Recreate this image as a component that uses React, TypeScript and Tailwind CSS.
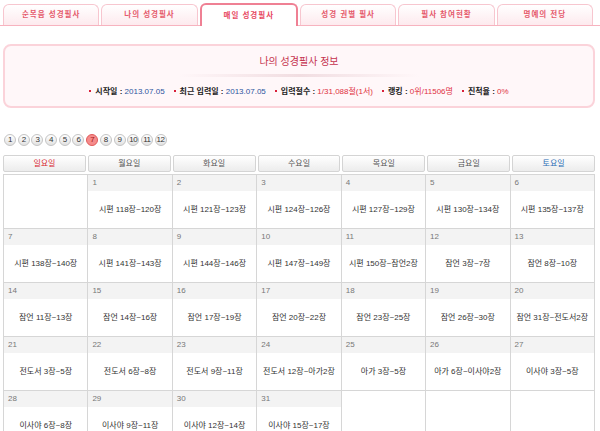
const tabs = ["순복음 성경필사", "나의 성경필사", "매일 성경필사", "성경 권별 필사", "필사 참여현황", "명예의 전당"];
const days = ["일요일", "월요일", "화요일", "수요일", "목요일", "금요일", "토요일"];

type Cell = { day: number; text: string } | null;

const weeks: Cell[][] = [
  [
    null,
    { day: 1, text: "시편 118장~120장" },
    { day: 2, text: "시편 121장~123장" },
    { day: 3, text: "시편 124장~126장" },
    { day: 4, text: "시편 127장~129장" },
    { day: 5, text: "시편 130장~134장" },
    { day: 6, text: "시편 135장~137장" },
  ],
  [
    { day: 7, text: "시편 138장~140장" },
    { day: 8, text: "시편 141장~143장" },
    { day: 9, text: "시편 144장~146장" },
    { day: 10, text: "시편 147장~149장" },
    { day: 11, text: "시편 150장~잠언2장" },
    { day: 12, text: "잠언 3장~7장" },
    { day: 13, text: "잠언 8장~10장" },
  ],
  [
    { day: 14, text: "잠언 11장~13장" },
    { day: 15, text: "잠언 14장~16장" },
    { day: 16, text: "잠언 17장~19장" },
    { day: 17, text: "잠언 20장~22장" },
    { day: 18, text: "잠언 23장~25장" },
    { day: 19, text: "잠언 26장~30장" },
    { day: 20, text: "잠언 31장~전도서2장" },
  ],
  [
    { day: 21, text: "전도서 3장~5장" },
    { day: 22, text: "전도서 6장~8장" },
    { day: 23, text: "전도서 9장~11장" },
    { day: 24, text: "전도서 12장~아가2장" },
    { day: 25, text: "아가 3장~5장" },
    { day: 26, text: "아가 6장~이사야2장" },
    { day: 27, text: "이사야 3장~5장" },
  ],
  [
    { day: 28, text: "이사야 6장~8장" },
    { day: 29, text: "이사야 9장~11장" },
    { day: 30, text: "이사야 12장~14장" },
    { day: 31, text: "이사야 15장~17장" },
    null,
    null,
    null,
  ],
];

function Bullet() {
  return <span className="inline-block w-[2px] h-[2px] bg-[#d9203a] mr-[4px] mb-[2px] align-middle" />;
}

export default function App() {
  const active = 2;
  const month = 7;

  return (
    <div className="w-[600px] h-[431px] overflow-hidden bg-white font-['Liberation_Sans','Noto_Sans_CJK_KR',sans-serif]">
      {/* tabs */}
      <div className="flex items-end gap-[2px] pl-[3px] pr-[7px] pt-[3px] border-b border-[#f7b3bf] h-[26px]">
        {tabs.map((t, i) =>
          i === active ? (
            <div
              key={t}
              className="flex-1 h-[23px] -mb-px bg-white border-2 border-b-0 border-[#ef8094] rounded-t-[6px] flex items-center justify-center text-[7.5px] font-bold tracking-[1px] text-[#e7485f]"
            >
              {t}
            </div>
          ) : (
            <div
              key={t}
              className="flex-1 h-[21px] bg-gradient-to-b from-white to-[#fdeaee] border border-b-0 border-[#f7c6cf] rounded-t-[6px] flex items-center justify-center text-[7.5px] font-bold tracking-[1px] text-[#e55a6c]"
            >
              {t}
            </div>
          )
        )}
      </div>

      {/* info box */}
      <div className="mx-[3px] mr-[5px] mt-[18px] h-[64px] border-2 border-[#fbd3da] bg-[#fff7f9] rounded-[8px] flex flex-col items-center">
        <div className="mt-[10px] text-[10px] leading-[12px] text-[#c5334f]">나의 성경필사 정보</div>
        <div className="mt-[6px] h-[3px] w-[240px] bg-gradient-to-r from-transparent via-[#f1dde1] to-transparent" />
        <div className="mt-[10px] text-[8px] leading-[10px] text-[#222] flex gap-[9px] whitespace-nowrap">
          <span>
            <Bullet />
            <b>시작일 :</b> <span className="text-[#2c55a0]">2013.07.05</span>
          </span>
          <span>
            <Bullet />
            <b>최근 입력일 :</b> <span className="text-[#2c55a0]">2013.07.05</span>
          </span>
          <span>
            <Bullet />
            <b>입력절수 :</b> <span className="text-[#e0313f]">1/31,088절(1서)</span>
          </span>
          <span>
            <Bullet />
            <b>랭킹 :</b> <span className="text-[#e0313f]">0위/11506명</span>
          </span>
          <span>
            <Bullet />
            <b>진척율 :</b> <span className="text-[#e0313f]">0%</span>
          </span>
        </div>
      </div>

      {/* months */}
      <div className="mt-[26px] pl-[4px] flex gap-[1.7px]">
        {Array.from({ length: 12 }, (_, i) => i + 1).map((m) => (
          <div
            key={m}
            className={
              m === month
                ? "w-[12px] h-[12px] rounded-full border border-[#e15b5b] bg-[#f58b8b] flex items-center justify-center text-[8px] tracking-[-0.5px] text-[#9e1515]"
                : "w-[12px] h-[12px] rounded-full border border-[#c4c4c4] bg-gradient-to-b from-white to-[#e2e2e2] flex items-center justify-center text-[8px] tracking-[-0.5px] text-[#333]"
            }
          >
            {m}
          </div>
        ))}
      </div>

      {/* calendar */}
      <div className="mt-[9px] ml-[3px] w-[592px]">
        <div className="grid grid-cols-7 gap-[2px] h-[17px]">
          {days.map((d, i) => (
            <div
              key={d}
              className={`border border-[#d4d4d4] rounded-[2px] bg-gradient-to-b from-white to-[#ececec] flex items-center justify-center text-[8px] ${
                i === 0 ? "text-[#d8262f]" : i === 6 ? "text-[#2a6cb5]" : "text-[#555]"
              }`}
            >
              {d}
            </div>
          ))}
        </div>
        <table className="mt-[2px] w-full table-fixed border-collapse">
          <tbody>
            {weeks.map((w, wi) => (
              <tr key={wi}>
                {w.map((c, ci) => (
                  <td key={ci} className="border border-[#d6d6d6] p-0 align-top h-[54px]">
                    {c && (
                      <div className="flex flex-col">
                        <div className="h-[16px] bg-[#f3f3f3] px-[4px] text-[8px] leading-[16px] text-[#777]">{c.day}</div>
                        <div className="h-[37px] flex items-center justify-center text-[8px] text-[#333] whitespace-nowrap">
                          {c.text}
                        </div>
                      </div>
                    )}
                  </td>
                ))}
              </tr>
            ))}
          </tbody>
        </table>
      </div>
    </div>
  );
}
